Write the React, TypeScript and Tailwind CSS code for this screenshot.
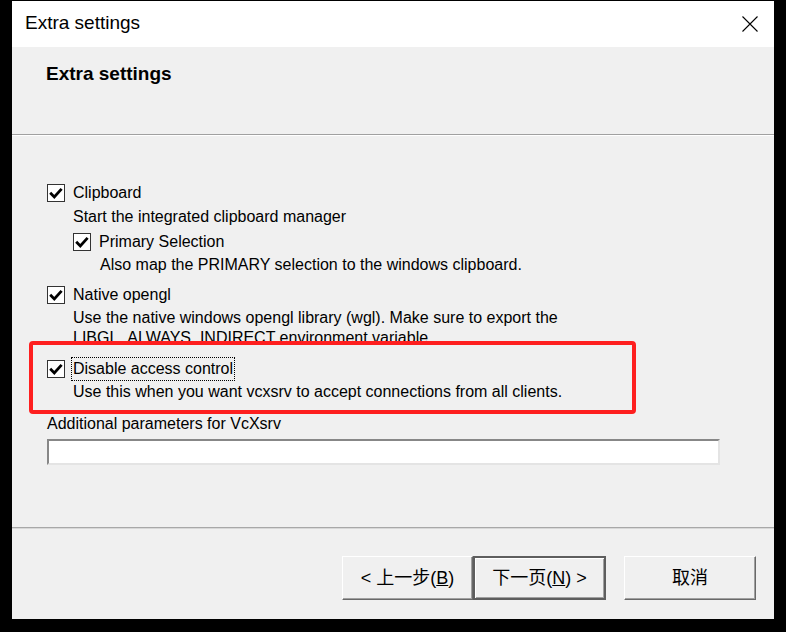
import React from "react";

const font = { fontFamily: '"Liberation Sans", "Noto Sans CJK SC", Arial, sans-serif' };

const CheckBox = () => (
  <div className="w-[18px] h-[18px] shrink-0 bg-white border border-[#333333] flex items-center justify-center">
    <svg width="16" height="16" viewBox="0 0 16 16">
      <path d="M2.2 7.8 L6.3 11.9 L13.6 3.9" fill="none" stroke="#000" strokeWidth="2.8" strokeLinejoin="miter" />
    </svg>
  </div>
);

const CheckRow = ({ label, focused }: { label: string; focused?: boolean }) => (
  <div className="flex items-center h-[20px] gap-[8px]">
    <CheckBox />
    {focused ? (
      <span className="border border-dotted border-black px-[1px] leading-[22px] -ml-[2px]">{label}</span>
    ) : (
      <span className="leading-[20px]">{label}</span>
    )}
  </div>
);

const App = () => {
  return (
    <div className="w-[786px] h-[632px] bg-black pl-[12px] pt-[1px] text-black" style={font}>
      <div className="relative w-[762px] h-[618px] bg-[#f0f0f0] flex flex-col">
        {/* title bar */}
        <div className="h-[46px] bg-white flex items-start justify-between shrink-0">
          <span className="pl-[13px] pt-[11px] text-[19px] leading-[22px]">Extra settings</span>
          <svg width="16" height="16" viewBox="0 0 16 16" className="mt-[15px] mr-[16px]">
            <path d="M0.5 0.5 L15.5 15.5 M15.5 0.5 L0.5 15.5" stroke="#000" strokeWidth="1.1" />
          </svg>
        </div>

        {/* header */}
        <div className="h-[87px] shrink-0 pl-[34px] pt-[16px]">
          <span className="text-[19px] leading-[22px] font-bold">Extra settings</span>
        </div>
        <div className="h-[2px] shrink-0 border-t border-[#a0a0a0] bg-white" />

        {/* content */}
        <div className="flex-1 flex flex-col pl-[35px] pt-[47px] text-[16px] leading-[20px]">
          <CheckRow label="Clipboard" />
          <div className="ml-[26px] mt-[4px]">Start the integrated clipboard manager</div>
          <div className="ml-[26px] mt-[5px]">
            <CheckRow label="Primary Selection" />
          </div>
          <div className="ml-[53px] mt-[3px]">Also map the PRIMARY selection to the windows clipboard.</div>

          <div className="mt-[10px]">
            <CheckRow label="Native opengl" />
          </div>
          <div className="ml-[26px] mt-[3px] h-[33px] overflow-hidden w-[520px]">
            Use the native windows opengl library (wgl). Make sure to export the LIBGL_ALWAYS_INDIRECT environment variable.
          </div>

          <div className="mt-[18px]">
            <CheckRow label="Disable access control" focused />
          </div>
          <div className="ml-[26px] mt-[3px]">Use this when you want vcxsrv to accept connections from all clients.</div>

          <div className="mt-[12px]">Additional parameters for VcXsrv</div>
          <div className="mt-[5px] w-[673px] h-[26px] bg-white border-2 border-t-[#878787] border-l-[#878787] border-b-[#e4e4e4] border-r-[#e4e4e4]" />
        </div>

        {/* footer */}
        <div className="h-[2px] shrink-0 border-t border-[#a8a8a8] bg-[#d8d8d8]" />
        <div className="h-[90px] shrink-0 flex items-start justify-end pt-[27px] pr-[18px] text-[18px]">
          <button className="w-[131px] h-[44px] bg-[#f0f0f0] border border-t-white border-l-white border-r-[#696969] border-b-[#696969] shadow-[inset_-1px_-1px_0_#a0a0a0] flex items-center justify-center">
            <span>&lt; 上一步(<span className="underline">B</span>)</span>
          </button>
          <button className="w-[133px] h-[44px] bg-[#f0f0f0] border-2 border-[#5e5e5e] shadow-[inset_1px_1px_0_#ffffff,inset_-1px_-1px_0_#a0a0a0] flex items-center justify-center">
            <span>下一页(<span className="underline">N</span>) &gt;</span>
          </button>
          <button className="ml-[18px] w-[132px] h-[44px] bg-[#f0f0f0] border border-t-white border-l-white border-r-[#696969] border-b-[#696969] shadow-[inset_-1px_-1px_0_#a0a0a0] flex items-center justify-center">
            取消
          </button>
        </div>

        {/* red highlight annotation */}
        <div className="absolute left-[17px] top-[340px] w-[607px] h-[73px] border-4 border-[#fe1f1f] rounded-[4px]" />
      </div>
    </div>
  );
};

export default App;
